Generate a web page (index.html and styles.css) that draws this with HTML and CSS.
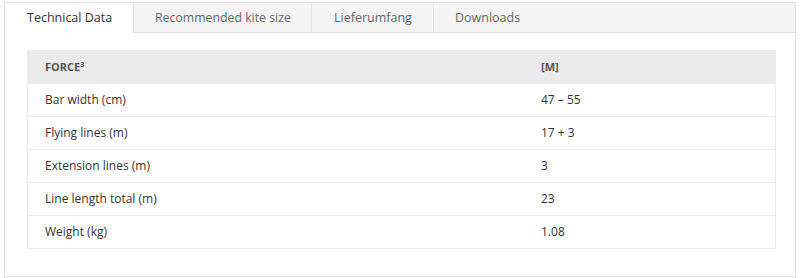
FILE: index.html
```html
<!DOCTYPE html>
<html>
<head>
<meta charset="utf-8">
<link rel="stylesheet" href="styles.css">
</head>
<body>
<div class="panel">
  <div class="tabs">
    <div class="tab active">Technical Data</div>
    <div class="tab t2">Recommended kite size</div>
    <div class="tab t3">Lieferumfang</div>
    <div class="tab t4">Downloads</div>
    <div class="tab-fill"></div>
  </div>
  <div class="content">
    <table class="data">
      <thead>
        <tr><th class="c1">FORCE³</th><th>[M]</th></tr>
      </thead>
      <tbody>
        <tr><td class="c1">Bar width (cm)</td><td>47 – 55</td></tr>
        <tr><td class="c1">Flying lines (m)</td><td>17 + 3</td></tr>
        <tr><td class="c1">Extension lines (m)</td><td>3</td></tr>
        <tr><td class="c1">Line length total (m)</td><td>23</td></tr>
        <tr><td class="c1">Weight (kg)</td><td>1.08</td></tr>
      </tbody>
    </table>
  </div>
</div>
</body>
</html>
```
FILE: styles.css
```css
html, body { margin: 0; padding: 0; background: #fff; }
body { font-family: "Open Sans", "Liberation Sans", sans-serif; color: #333; }
.panel {
  margin: 2px 4px 0 4px;
  width: 792px;
  height: 275px;
  box-sizing: border-box;
  border: 1px solid #e2e2e2;
  display: flex;
  flex-direction: column;
}
.tabs { display: flex; height: 30px; }
.tab {
  box-sizing: border-box;
  font-size: 12.5px;
  line-height: 29px;
  padding-left: 22px;
  color: #666;
  background: #f4f4f4;
  border-left: 1px solid #e2e2e2;
  border-bottom: 1px solid #e2e2e2;
}
.tab.active { width: 128px; background: #fff; color: #333; border-left: none; border-bottom-color: #fff; }
.t2 { width: 178px; padding-left: 21px; font-size: 12.3px; }
.t3 { width: 122px; padding-left: 22px; }
.t4 { width: 105px; padding-left: 21px; }
.tab-fill { flex: 1; background: #f4f4f4; border-bottom: 1px solid #e2e2e2; }
.content { padding: 17px 20px 0 22px; }
.data {
  width: 749px;
  border-collapse: collapse;
  font-size: 12px;
  border: 1px solid #ececec;
}
.data th, .data td { height: 32px; padding: 0 0 0 17px; line-height: 16px; text-align: left; }
.data th {
  background: #ebebeb;
  font-weight: 700;
  color: #555;
  font-size: 11px;
  height: 32px;
}
.data td { border-top: 1px solid #ececec; }
.c1 { width: 479px; }
```
